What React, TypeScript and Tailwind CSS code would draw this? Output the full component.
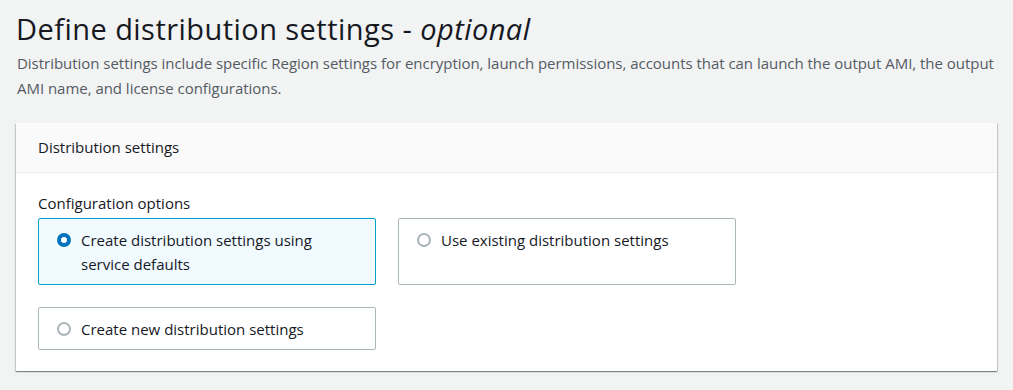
const OPTIONS = [
  { id: "defaults", label: "Create distribution settings using service defaults", selected: true },
  { id: "existing", label: "Use existing distribution settings", selected: false },
  { id: "new", label: "Create new distribution settings", selected: false },
];

function Radio({ checked }: { checked: boolean }) {
  return checked ? (
    <span className="mt-[5px] h-[14px] w-[14px] shrink-0 rounded-full border-[4px] border-[#0073bb] bg-white" />
  ) : (
    <span className="mt-[5px] h-[14px] w-[14px] shrink-0 rounded-full border-[2px] border-[#aab7b8] bg-white" />
  );
}

export default function App() {
  return (
    <div className="min-h-[390px] bg-[#f2f3f3] px-[16px] pt-[10px] text-[#16191f] [font-family:'Open_Sans','Noto_Sans',sans-serif]">
      <h1 className="text-[29px] font-normal leading-[38px] tracking-[0.45px]">
        Define distribution settings - <i>optional</i>
      </h1>
      <p className="-mr-[12px] mt-[3px] pl-px text-[15px] leading-[25px] text-[#545b64] tracking-[-0.03px]">
        Distribution settings include specific Region settings for encryption, launch permissions, accounts that can launch the output AMI, the output AMI name, and license configurations.
      </p>

      <section className="mt-[22px] w-[981px] bg-white shadow-[0_1px_1px_0_rgba(0,28,36,0.3),1px_1px_1px_0_rgba(0,28,36,0.15),-1px_1px_1px_0_rgba(0,28,36,0.15)]">
        <header className="flex h-[50px] items-center border-b border-[#eaeded] bg-[#fafafa] px-[22px] text-[15px]">
          Distribution settings
        </header>
        <div className="px-[22px] pb-[21px] pt-[19px]">
          <div className="text-[15px] leading-[22px]">Configuration options</div>
          <div className="mt-[4px] grid grid-cols-[338px_338px] gap-x-[22px] gap-y-[22px]">
            {OPTIONS.map((o) => (
              <label
                key={o.id}
                className={`flex gap-[10px] border px-[18px] py-[9px] text-[15px] leading-[24px] ${
                  o.selected ? "border-[#00a1c9] bg-[#f1faff]" : "border-[#aab7b8] bg-white"
                } ${o.id === "new" ? "h-[43px]" : "h-[67px]"} rounded-[2px]`}
              >
                <Radio checked={o.selected} />
                <span className={o.selected ? "pr-[40px]" : ""}>{o.label}</span>
              </label>
            ))}
          </div>
        </div>
      </section>
    </div>
  );
}
